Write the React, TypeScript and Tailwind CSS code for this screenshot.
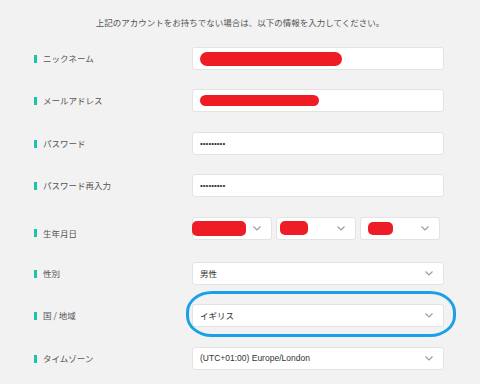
const jp = "font-['Noto_Sans_CJK_JP',sans-serif]";

function Chevron() {
  return (
    <svg width="8" height="5" viewBox="0 0 8 5" className="shrink-0">
      <path d="M0.5 0.5 L4 4 L7.5 0.5" fill="none" stroke="#9a9a9a" strokeWidth="1.1" />
    </svg>
  );
}

function Label({ text, className = "" }: { text: string; className?: string }) {
  return (
    <div className={`w-[192px] pl-[34px] flex items-center gap-[6px] ${className}`}>
      <span className="w-[3px] h-[8px] bg-[#1cc4ab]" />
      <span className={`text-[8.5px] text-[#555] ${jp}`}>{text}</span>
    </div>
  );
}

function Box({ children, w = "w-[252px]", select = false }: { children?: React.ReactNode; w?: string; select?: boolean }) {
  return (
    <div
      className={`${w} h-[23px] bg-white border border-[#e3e3e3] rounded-[3px] flex items-center justify-between pl-[7px] pr-[10px]`}
    >
      <div className="flex items-center">{children}</div>
      {select && <Chevron />}
    </div>
  );
}

const Redact = ({ w, h }: { w: string; h: string }) => <div className={`${w} ${h} bg-[#ee1c25] rounded-full`} />;

const Dots = () => (
  <span className="text-[8px] leading-none text-[#333] font-['Liberation_Sans',sans-serif]">•••••••••</span>
);

export default function App() {
  return (
    <div className="relative w-[480px] h-[384px] bg-[#f2f2f2] overflow-hidden">
      <p className={`pt-[16px] text-center text-[8.5px] leading-[12px] text-[#555] ${jp}`}>
        上記のアカウントをお持ちでない場合は、以下の情報を入力してください。
      </p>

      <div className="mt-[19px] flex flex-col">
        <div className="flex h-[23px]">
          <Label text="ニックネーム" />
          <Box>
            <Redact w="w-[142px]" h="h-[14px]" />
          </Box>
        </div>

        <div className="flex h-[23px] mt-[19px]">
          <Label text="メールアドレス" />
          <Box>
            <Redact w="w-[119px]" h="h-[11px]" />
          </Box>
        </div>

        <div className="flex h-[23px] mt-[20px]">
          <Label text="パスワード" />
          <Box>
            <Dots />
          </Box>
        </div>

        <div className="flex h-[23px] mt-[19px]">
          <Label text="パスワード再入力" />
          <Box>
            <Dots />
          </Box>
        </div>

        <div className="flex h-[23px] mt-[20px]">
          <Label text="生年月日" className="pt-[9px]" />
          <div className="flex gap-[4px]">
            <div className="w-[80px] h-[23px] bg-white border border-[#e3e3e3] rounded-[3px] flex items-center justify-between pr-[10px]">
              <div className="w-[54px] h-[15px] bg-[#ee1c25] rounded-[5px] -ml-px" />
              <Chevron />
            </div>
            <div className="w-[80px] h-[23px] bg-white border border-[#e3e3e3] rounded-[3px] flex items-center justify-between pl-[3px] pr-[10px]">
              <div className="w-[28px] h-[14px] bg-[#ee1c25] rounded-[5px] -mt-[2px]" />
              <Chevron />
            </div>
            <div className="w-[80px] h-[23px] bg-white border border-[#e3e3e3] rounded-[3px] flex items-center justify-between pl-[7px] pr-[10px]">
              <div className="w-[25px] h-[13px] bg-[#ee1c25] rounded-[5px]" />
              <Chevron />
            </div>
          </div>
        </div>

        <div className="flex h-[23px] mt-[22px]">
          <Label text="性別" />
          <Box select>
            <span className={`text-[8.5px] text-[#333] ${jp}`}>男性</span>
          </Box>
        </div>

        <div className="flex h-[23px] mt-[19px]">
          <Label text="国 / 地域" />
          <Box select>
            <span className={`text-[8.5px] text-[#333] ${jp}`}>イギリス</span>
          </Box>
        </div>

        <div className="flex h-[23px] mt-[20px]">
          <Label text="タイムゾーン" />
          <Box select>
            <span className="text-[8.5px] text-[#333] font-['Liberation_Sans',sans-serif]">(UTC+01:00) Europe/London</span>
          </Box>
        </div>
      </div>

      {/* hand-drawn highlight */}
      <div className="absolute left-[186px] top-[291px] w-[270px] h-[46px] border-[3px] border-[#1aa0e6] rounded-[26px/21px]" />
    </div>
  );
}
